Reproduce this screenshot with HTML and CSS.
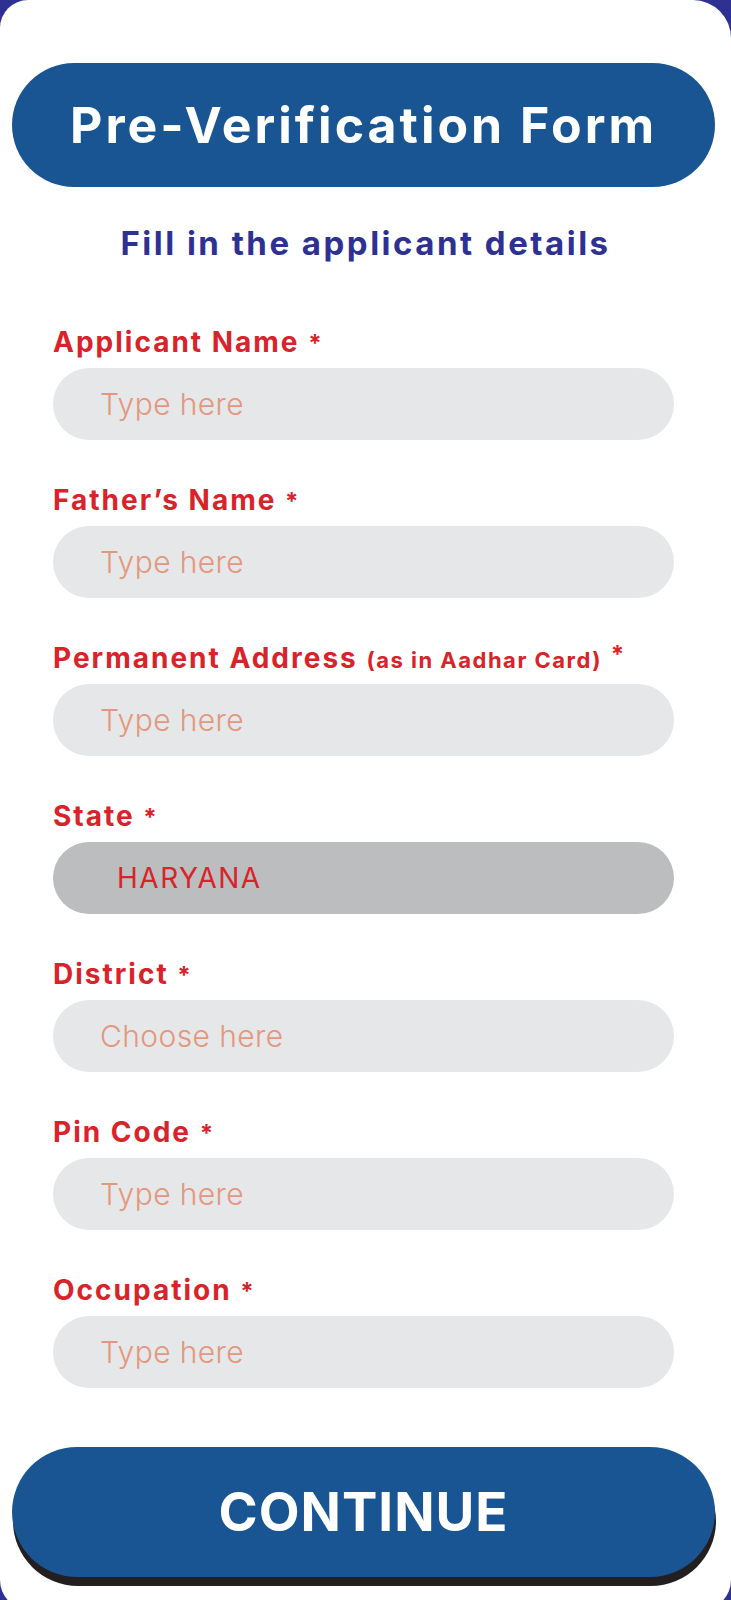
FILE: index.html
```html
<!DOCTYPE html>
<html lang="en">
<head>
<meta charset="utf-8">
<title>Pre-Verification Form</title>
<link rel="stylesheet" href="styles.css">
</head>
<body>
<main class="card">
  <h1 class="title-pill">Pre-Verification Form</h1>
  <p class="subtitle">Fill in the applicant details</p>
  <form class="form">
    <div class="field">
      <label class="label">Applicant Name <span class="req">*</span></label>
      <input class="input" type="text" placeholder="Type here">
    </div>
    <div class="field">
      <label class="label">Father’s Name <span class="req">*</span></label>
      <input class="input" type="text" placeholder="Type here">
    </div>
    <div class="field">
      <label class="label">Permanent Address <span class="note">(as in Aadhar Card)</span> <span class="req req-up">*</span></label>
      <input class="input" type="text" placeholder="Type here">
    </div>
    <div class="field">
      <label class="label">State <span class="req">*</span></label>
      <input class="input input-filled" type="text" value="HARYANA" readonly>
    </div>
    <div class="field">
      <label class="label">District <span class="req">*</span></label>
      <input class="input" type="text" placeholder="Choose here">
    </div>
    <div class="field">
      <label class="label">Pin Code <span class="req">*</span></label>
      <input class="input" type="text" placeholder="Type here">
    </div>
    <div class="field">
      <label class="label">Occupation <span class="req">*</span></label>
      <input class="input" type="text" placeholder="Type here">
    </div>
  </form>
  <button class="continue" type="button">CONTINUE</button>
</main>
</body>
</html>
```
FILE: styles.css
```css
html, body {
  margin: 0;
  padding: 0;
  height: 1600px;
  overflow: hidden;
}
body {
  background: #2e3192;
  font-family: Inter, "Open Sans", "Liberation Sans", sans-serif;
}
.card {
  box-sizing: border-box;
  width: 731px;
  height: 1610px;
  background: #ffffff;
  border-radius: 28px 38px 30px 30px;
  padding-top: 63px;
  display: flex;
  flex-direction: column;
}
.title-pill {
  margin: 0 0 0 12px;
  width: 703px;
  height: 124px;
  border-radius: 62px;
  background: #1a5593;
  color: #ffffff;
  font-size: 50px;
  font-weight: 700;
  letter-spacing: 3px;
  display: flex;
  align-items: center;
  justify-content: center;
}
.subtitle {
  margin: 36px 0 0;
  height: 40px;
  line-height: 40px;
  text-align: center;
  color: #2e3192;
  font-size: 33px;
  font-weight: 700;
  letter-spacing: 2.5px;
}
.form {
  margin-top: 61px;
  display: flex;
  flex-direction: column;
  gap: 42px;
}
.field {
  display: flex;
  flex-direction: column;
  gap: 7.5px;
  padding-left: 53px;
}
.label {
  height: 36px;
  line-height: 36px;
  color: #d9232a;
  font-size: 28px;
  font-weight: 700;
  letter-spacing: 2px;
  white-space: nowrap;
}
.note {
  font-size: 22px;
  letter-spacing: 1.5px;
}
.req {
  font-size: 24px;
  letter-spacing: 0;
}
.req-up {
  position: relative;
  top: -5px;
}
.input {
  box-sizing: border-box;
  width: 621px;
  height: 72.5px;
  border: none;
  border-radius: 36px;
  background: #e6e7e8;
  padding: 0 0 0 47px;
  font-family: inherit;
  font-size: 30px;
  font-weight: 300;
  letter-spacing: 0.4px;
  color: #d9232a;
  outline: none;
}
.input::placeholder {
  color: #e3977f;
  opacity: 1;
}
.input-filled {
  background: #bbbdbf;
  padding-left: 64px;
  font-size: 28px;
  font-weight: 400;
  letter-spacing: 1.5px;
}
.continue {
  margin: 58.5px 0 0 12px;
  width: 703px;
  height: 130px;
  border: none;
  border-radius: 65px;
  background: #1a5593;
  box-shadow: 1px 9px 0 #231f20;
  color: #ffffff;
  font-family: inherit;
  font-size: 53px;
  font-weight: 700;
  letter-spacing: 1px;
  padding: 0;
}
```
